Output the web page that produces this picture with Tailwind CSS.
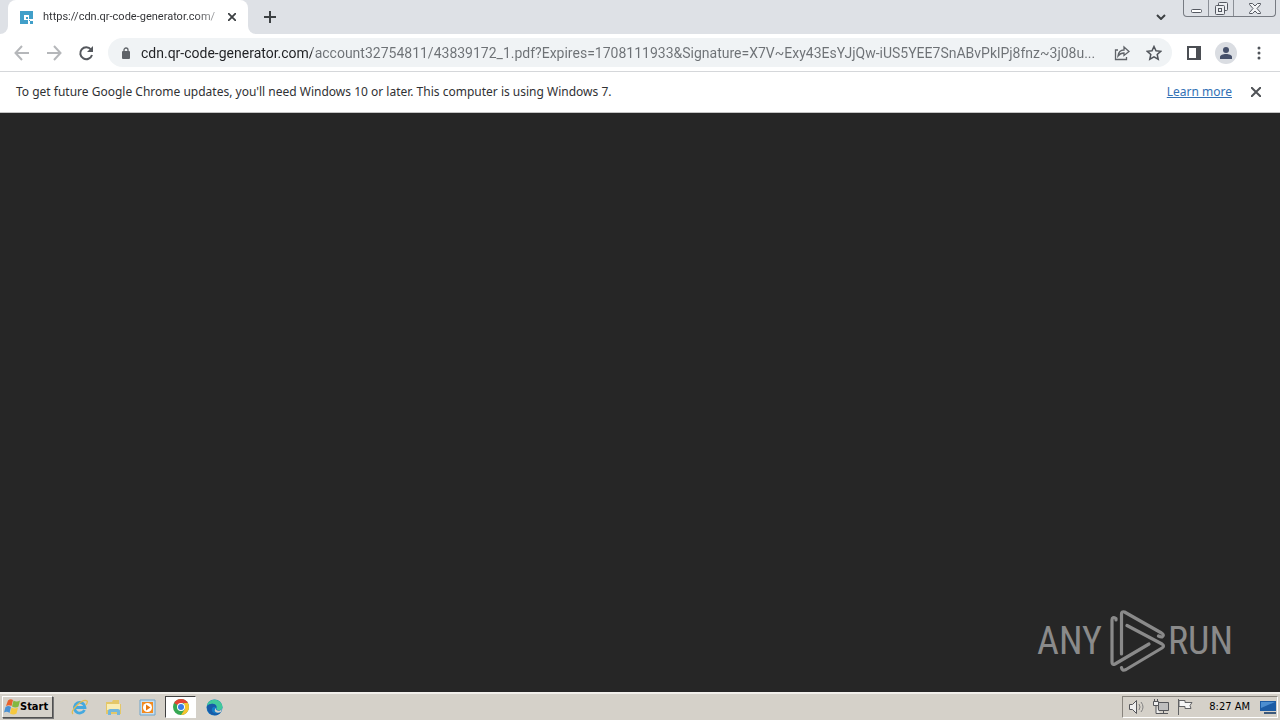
<!DOCTYPE html>
<html lang="en">
<head>
<meta charset="utf-8">
<title>Browser desktop</title>
<script src="https://cdn.jsdelivr.net/npm/@tailwindcss/browser@4"></script>
</head>
<body class="flex h-screen min-h-0 flex-col overflow-hidden bg-white font-[Roboto,sans-serif] text-[13px] text-[#303134]">
<header class="flex h-[34px] shrink-0 bg-[#dee1e6]">
  <div class="flex w-2 bg-white"><span class="flex-1 rounded-br-lg bg-[#dee1e6]"></span></div>
  <div class="flex w-60 items-center rounded-t-lg bg-white pl-3 pr-2">
    <svg class="size-[13px] shrink-0" viewBox="0 0 13 13"><path fill="#419fc9" d="M0 0h13v8H9V4H4v5h4v4H0zM6 6h2v2H6zM9 9h1v1H9zM10 10h3v3h-3z"/></svg>
    <span class="ml-[10px] flex-1 whitespace-nowrap bg-linear-to-r from-[#303134] from-85% to-[#bbbdc0] bg-clip-text text-[11px] text-transparent">https://cdn.qr-code-generator.com/</span>
    <button aria-label="Close tab" class="ml-1 grid size-4 place-items-center"><svg class="size-2" viewBox="0 0 8 8" stroke="#3c4043" stroke-width="1.8"><path d="M0 0l8 8M8 0L0 8"/></svg></button>
  </div>
  <div class="flex w-2 bg-white"><span class="flex-1 rounded-bl-lg bg-[#dee1e6]"></span></div>
  <button aria-label="New tab" class="grid w-7 place-items-center"><svg class="size-3" viewBox="0 0 12 12" stroke="#3c4043" stroke-width="2"><path d="M6 0v12M0 6h12"/></svg></button>
  <button aria-label="Search tabs" class="ml-auto mr-[17px] grid place-items-center"><svg class="h-[6px] w-[10px]" viewBox="0 0 10 6" fill="none" stroke="#3c4043" stroke-width="2"><path d="M1 1l4 4 4-4"/></svg></button>
  <div class="mr-1 flex h-[17px] rounded-b border border-t-0 border-[#777b82] bg-[#dee1e6]">
    <button aria-label="Minimize" class="grid w-[25px] place-items-center border-r border-[#8b8f96]"><svg class="size-[13px]" viewBox="0 0 13 13" fill="#fff" stroke="#555961"><rect x="1.500" y="7.500" width="10" height="3" rx="1"/></svg></button>
    <button aria-label="Restore" class="grid w-[25px] place-items-center border-r border-[#8b8f96]"><svg class="size-[13px]" viewBox="0 0 13 13" fill="#eceef1" stroke="#555961"><rect x="3.500" y=".5" width="9" height="8" rx="1"/><rect x=".5" y="3.500" width="9" height="9" rx="1"/><rect x="3.500" y="6.500" width="3" height="3"/></svg></button>
    <button aria-label="Close window" class="grid w-[41px] place-items-center"><svg class="h-[11px] w-3" viewBox="0 0 12 11" fill="#f3f4f6" stroke="#555961"><path d="M.5.5h3L6 3 8.500.5h3v1L8 5.500l3.500 4v1h-3L6 8l-2.500 2.500h-3v-1l3.500-4-3.500-4z"/></svg></button>
  </div>
</header>
<nav class="flex h-[38px] shrink-0 items-center border-b border-[#d5d7da] bg-white pl-[14px] pr-3">
  <button aria-label="Back" class="size-4"><svg class="size-4" viewBox="0 0 16 16" fill="none" stroke="#b5b7ba" stroke-width="2"><path d="M15 8H2M8 1L1.500 8 8 15"/></svg></button>
  <button aria-label="Forward" class="ml-4 size-4"><svg class="size-4" viewBox="0 0 16 16" fill="none" stroke="#b5b7ba" stroke-width="2"><path d="M1 8h13M8 1l6.500 7L8 15"/></svg></button>
  <button aria-label="Reload" class="ml-4 size-4"><svg class="size-4" viewBox="0 0 16 16"><path d="M13 4.500A6 6 0 1 0 14 10" fill="none" stroke="#55585d" stroke-width="2"/><path d="M15 1v6H9z" fill="#55585d"/></svg></button>
  <div class="ml-[14px] flex h-[29px] min-w-0 flex-1 items-center rounded-full bg-[#f0f3f5] pl-[14px] pr-[10px]">
    <svg class="h-3 w-2 shrink-0" viewBox="0 0 8 12"><path d="M2 5V3a2 2 0 0 1 4 0v2" fill="none" stroke="#5f6368" stroke-width="1.300"/><rect y="4" width="8" height="8" rx="1" fill="#5f6368"/></svg>
    <input aria-label="Address" class="ml-[11px] h-6 min-w-0 flex-1 bg-[linear-gradient(90deg,#202124_171px,#6d7175_171px)] bg-clip-text text-[14px] text-transparent outline-none" value="cdn.qr-code-generator.com/account32754811/43839172_1.pdf?Expires=1708111933&amp;Signature=X7V~Exy43EsYJjQw-iUS5YEE7SnABvPklPj8fnz~3j08u...">
    <button aria-label="Share" class="ml-3 size-4"><svg class="size-4" viewBox="0 0 16 16" fill="none" stroke="#5f6368" stroke-width="1.300"><path d="M4 5H1.500v9.500h11V12M4 11c.5-4 3-6 6-6V2l5 4.500-5 4V8c-3 0-4.500 1-6 3z"/></svg></button>
    <button aria-label="Bookmark" class="ml-4 size-4"><svg class="size-4" viewBox="0 0 16 16" fill="none" stroke="#50545a" stroke-width="1.500"><path d="M8 1.500l2 4.300 4.700.5-3.500 3.200 1 4.700L8 11.800l-4.200 2.400 1-4.700-3.500-3.200 4.700-.5z"/></svg></button>
  </div>
  <button aria-label="Side panel" class="ml-[14px] size-4"><svg class="size-4" viewBox="0 0 16 16"><path fill="#4b4e53" fill-rule="evenodd" d="M1 1h14v14H1zM3 3v10h7V3z"/></svg></button>
  <button aria-label="Profile" class="ml-[13px] grid size-[22px] place-items-center rounded-full bg-[#dadde2]"><svg class="size-3" viewBox="0 0 12 12" fill="#46506a"><circle cx="6" cy="3" r="3"/><path d="M0 12v-2c0-2 3-3 6-3s6 1 6 3v2z"/></svg></button>
  <button aria-label="Menu" class="ml-[13px] grid h-5 w-[18px] place-items-center"><svg class="h-[14px] w-1" viewBox="0 0 4 14" fill="#50545a"><circle cx="2" cy="2" r="1.500"/><circle cx="2" cy="7" r="1.500"/><circle cx="2" cy="12" r="1.500"/></svg></button>
</nav>
<section class="flex h-10 shrink-0 items-center bg-white pl-4 pr-[19px] font-['Noto_Sans',sans-serif] text-xs">
  <p>To get future Google Chrome updates, you'll need Windows 10 or later. This computer is using Windows 7.</p>
  <a href="#" class="ml-auto text-[#3271b5] underline">Learn more</a>
  <button aria-label="Dismiss" class="ml-[19px] grid size-[10px] place-items-center"><svg class="size-[10px]" viewBox="0 0 10 10" stroke="#505357" stroke-width="2"><path d="M0 0l10 10M10 0L0 10"/></svg></button>
</section>
<main class="flex min-h-0 flex-1 items-end justify-end border-t border-[#c4c4c4] bg-[#262626] pb-[20px] pr-[47px]">
  <div class="flex items-center text-[#8a8a8a]">
    <span class="font-[Roboto_Condensed,sans-serif] text-[38px] leading-none">ANY</span>
    <svg class="ml-2 h-[62px] w-[56px] shrink-0" viewBox="0 0 56 62" fill="none" stroke="currentColor" stroke-width="3.200" stroke-linecap="round" stroke-linejoin="round"><path d="M6 10V8.500Q2 6 2 10v42q0 3.500 3 2L39 34"/><path d="M11.500 44V4q0-3 3-2l37 21q3 2 1 3.500-1 1-4-.5"/><path d="M17 15.500L52 34q3 2 0 4L16 59.500q-4 2-4.500-2"/></svg>
    <span class="ml-[2px] font-[Roboto_Condensed,sans-serif] text-[38px] leading-none">RUN</span>
  </div>
</main>
<footer class="flex h-7 shrink-0 items-center border-t-2 border-[#f1efeb] bg-[#d5d1c9] px-[2px] text-[11px] text-black">
  <button class="flex h-[22px] w-[51px] items-center border border-t-white border-l-white border-r-[#505050] border-b-[#505050] pl-px font-bold shadow-[1px_1px_#777] font-['DejaVu_Sans_Condensed','DejaVu_Sans',sans-serif]"><svg class="size-4 shrink-0" viewBox="0 0 16 16"><path d="M4 1.500q2.500-2 5-.5L7.500 7Q5 5.500 2 7z" fill="#e8612c"/><path d="M9.500 1.500q3 2 6.500 0L14.500 7.500q-3 2-6.500 0z" fill="#83b840"/><path d="M1.500 8q3-2 5.500 0L5.500 14Q3 12 0 13.500z" fill="#4a91d4"/><path d="M7.500 8.500q3 2 6.500 0l-1.500 6q-3 2-6.500 0z" fill="#f6c83e"/></svg>Start</button>
  <button aria-label="Internet Explorer" class="ml-[18px] size-[17px]"><svg class="size-[17px]" viewBox="0 0 17 17" fill="none"><path d="M13.500 11A5.300 5.300 0 1 1 14 8.500H5" stroke="#45a9df" stroke-width="2.800"/><path d="M2 15C-2 12 12-1 16 2q1 1-1 4" stroke="#e3bd51" stroke-width="1.300"/></svg></button>
  <button aria-label="File Explorer" class="ml-[17px] size-[17px]"><svg class="size-[17px]" viewBox="0 0 17 17"><path d="M1 3h6l1-2h6v4h2v10H1z" fill="#e4c768"/><path d="M2 5h13v6H2z" fill="#f9edb4"/><path d="M3 16v-4q0-2 2-2h8q2 0 2 2v4h-3v-3H6v3z" fill="#73b7dc"/></svg></button>
  <button aria-label="Media Player" class="ml-[17px] size-[17px]"><svg class="size-[17px]" viewBox="0 0 17 17"><path d="M1 1h15v15H1z" fill="#c8dfef" stroke="#6fa5cb"/><path d="M3 3h11v11H3z" fill="#f28b20"/><circle cx="8.500" cy="8.500" r="4.500" fill="#fff"/><path d="M7 5.500l4.500 3L7 11.500z" fill="#e8780f"/></svg></button>
  <button aria-label="Chrome" class="ml-[9px] grid h-[22px] w-[31px] place-items-center border border-t-[#404040] border-l-[#404040] border-r-white border-b-white bg-white"><svg class="size-4" viewBox="0 0 16 16"><circle cx="8" cy="8" r="8" fill="#37a853"/><path d="M8 8L1.100 4A8 8 0 0 1 14.900 4H8z" fill="#e44435"/><path d="M8 16l4-6-1-6h3.900A8 8 0 0 1 8 16z" fill="#f8c42e"/><circle cx="8" cy="8" r="4" fill="#fff"/><circle cx="8" cy="8" r="3" fill="#397de7"/></svg></button>
  <button aria-label="Edge" class="ml-[10px] size-[17px]"><svg class="size-[17px]" viewBox="0 0 17 17"><circle cx="8.500" cy="8.500" r="8" fill="#137cc7"/><path d="M1 7C2-2 16-1 16.500 8c0 4-6 4-6 1.500C12 5 5 3 1 7z" fill="#42c99b"/><path d="M1 7c4-4 11-2 9 2-2-3-5 0-4 3s6 3 9 1c-5 7-15 2-14-6z" fill="#185ba7"/><path d="M10 9c-1 3 4 4 6 1l-1 3c-5 2-8-1-5-4z" fill="#d5d1c9"/></svg></button>
  <div class="ml-auto flex h-[22px] items-center border border-t-[#88847d] border-l-[#88847d] border-r-white border-b-white pl-[6px] pr-px">
    <svg class="size-4" viewBox="0 0 16 16" fill="#eee" stroke="#55565a"><path d="M.5 5.500h3l4-4v13l-4-4h-3z"/><path d="M10 5q2 3 0 6M12 3q4 5 0 10" fill="none" stroke="#828282"/></svg>
    <svg class="ml-2 size-4" viewBox="0 0 16 16" fill="#bebebe" stroke="#55565a"><path d="M5.500 3.500h10v8h-10zM7 14.500h8M10.500 12v2"/><path d="M.5 2.500h5v4h-5zM1.500 0v2M4.500 0v2M3 7v7.500h4" fill="#eee"/></svg>
    <svg class="ml-2 size-4" viewBox="0 0 16 16" fill="#f5f5f5" stroke="#626365"><path d="M1.500 0v16M2 1.500h6v2h7l-2 3 1 3H8v-2H2z"/></svg>
    <time class="ml-4 font-['DejaVu_Sans_Condensed','DejaVu_Sans',sans-serif]">8:27 AM</time>
    <button aria-label="Show desktop" class="ml-[10px] size-4"><svg class="size-4" viewBox="0 0 16 16"><path d="M0 2h16v10H0z" fill="#1c5ca5"/><path d="M1 3h14L1 9z" fill="#4c8ed0"/><path d="M4 13h12v2H4z" fill="#3c597b"/></svg></button>
  </div>
</footer>
</body>
</html>
